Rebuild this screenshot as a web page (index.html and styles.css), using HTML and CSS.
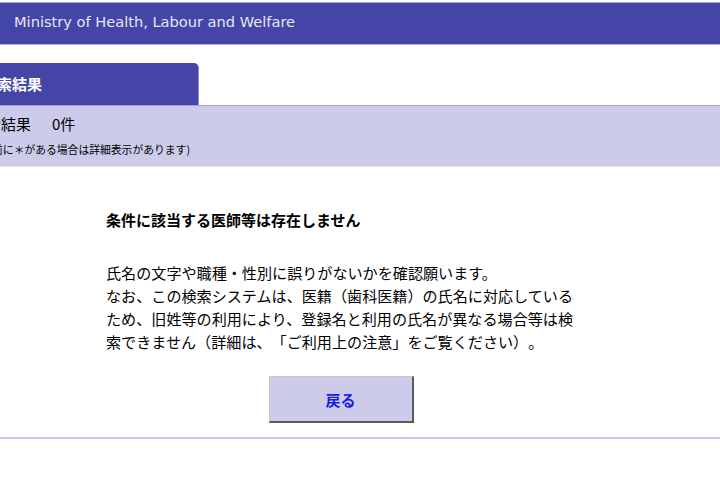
FILE: index.html
```html
<!DOCTYPE html>
<html lang="ja">
<head>
<meta charset="utf-8">
<title>検索結果</title>
<link rel="stylesheet" href="styles.css">
</head>
<body>
<header class="site-header">
  <div class="site-title">Ministry of Health, Labour and Welfare</div>
</header>
<div class="tab-row">
  <div class="tab">検索結果</div>
</div>
<section class="result-band">
  <div class="result-count">検索結果<span class="count">0件</span></div>
  <div class="result-note">(氏名の前に＊がある場合は詳細表示があります)</div>
</section>
<main class="message">
  <h2 class="message-title">条件に該当する医師等は存在しません</h2>
  <p class="message-text">氏名の文字や職種・性別に誤りがないかを確認願います。<br>なお、この検索システムは、医籍（歯科医籍）の氏名に対応しているため、旧姓等の利用により、登録名と利用の氏名が異なる場合等は検索できません（詳細は、「ご利用上の注意」をご覧ください）。</p>
  <div class="actions">
    <button class="back-btn" type="button">戻る</button>
  </div>
</main>
<hr class="footer-rule">
</body>
</html>
```
FILE: styles.css
```css
html, body {
  margin: 0;
  padding: 0;
  background: #ffffff;
}
body {
  font-family: "Noto Sans CJK JP", "Liberation Sans", sans-serif;
  color: #000;
  overflow: hidden;
  text-spacing-trim: space-all;
}
.site-header {
  margin-top: 2px;
  height: 41px;
  background: #4545a8;
  border-top: 1px solid #a8a8b8;
  border-bottom: 1px solid #b8b8c8;
  display: flex;
  align-items: center;
}
.site-title {
  padding-left: 14px;
  font-family: "DejaVu Sans", sans-serif;
  font-size: 14.6px;
  color: #e6e6f4;
  padding-bottom: 4px;
}
.tab-row {
  margin-top: 18px;
  display: flex;
}
.tab {
  width: 199px;
  height: 42px;
  box-sizing: border-box;
  background: #4545a8;
  border-right: 1px solid #8a8ae0;
  border-top-right-radius: 5px;
  color: #ffffff;
  font-weight: bold;
  font-size: 15px;
  line-height: 42px;
  text-indent: -18px;
  white-space: nowrap;
  overflow: hidden;
}
.result-band {
  background: #ccccea;
  border-top: 1px solid #9d9df0;
  border-bottom: 1px solid #e2e2ea;
  height: 60px;
  box-sizing: content-box;
}
.result-count {
  font-size: 15px;
  line-height: 20px;
  padding-top: 8px;
  text-indent: -29px;
  white-space: nowrap;
}
.count {
  margin-left: 21px;
}
.result-note {
  font-size: 10.8px;
  line-height: 14px;
  padding-top: 8px;
  text-indent: -44px;
  white-space: nowrap;
}
.message {
  margin-left: 106px;
  width: 470px;
}
.message-title {
  margin: 43px 0 0;
  font-size: 15px;
  font-weight: bold;
  line-height: 20px;
}
.message-text {
  margin: 31px 0 0;
  font-size: 15.1px;
  line-height: 23px;
}
.actions {
  display: flex;
  justify-content: center;
  margin-top: 23px;
}
.back-btn {
  width: 145px;
  height: 47px;
  box-sizing: border-box;
  background: #ccccea;
  border-top: 1px solid #c8c8c8;
  border-left: 1px solid #c8c8c8;
  border-right: 2px solid #5a5a5a;
  border-bottom: 2px solid #5a5a5a;
  font-family: "Noto Sans CJK JP", sans-serif;
  font-size: 15px;
  font-weight: bold;
  color: #1a1ae0;
  padding: 0;
}
.footer-rule {
  margin: 14px 0 0;
  border: 0;
  height: 2px;
  background: #c8c8fa;
}
```
